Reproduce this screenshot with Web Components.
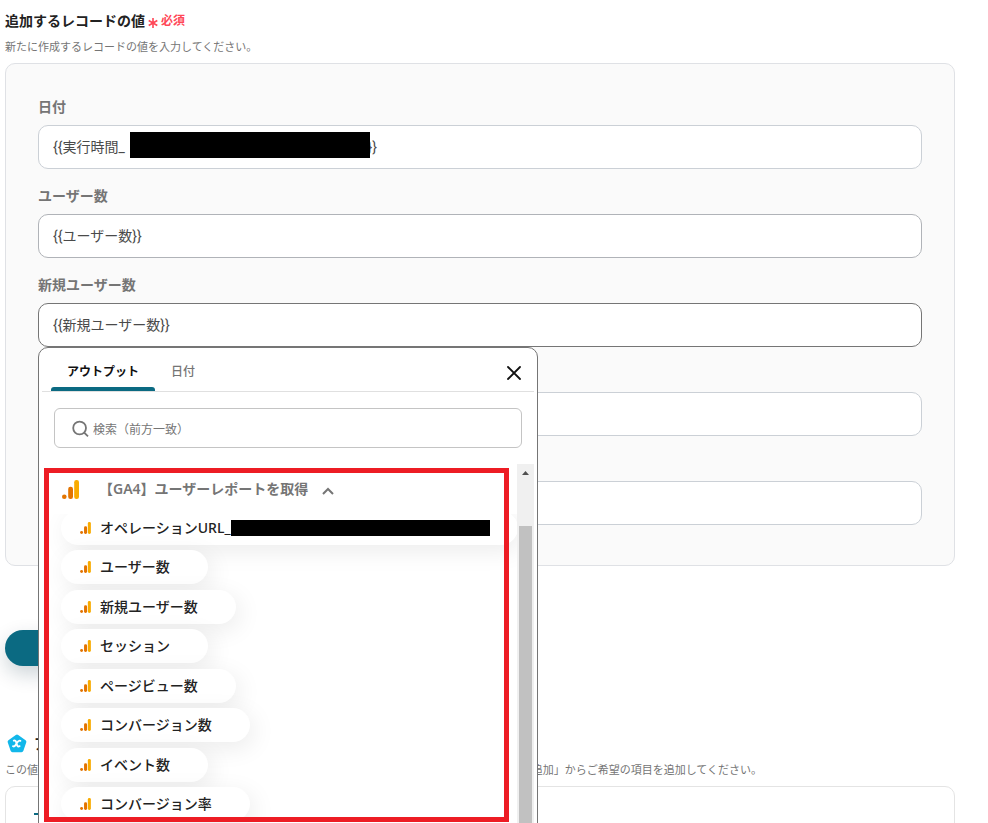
<!DOCTYPE html>
<html lang="ja">
<head>
<meta charset="utf-8">
<title>追加するレコードの値</title>
<style>
    body {
        margin: 0;
        height: 100vh;
        overflow: hidden;
        background: #fff;
        color: #222;
        font: 14px/20px "Noto Sans", "Noto Sans CJK JP", sans-serif;
    }
</style>
</head>
<body>
<record-page></record-page>

<script>
const GA_ICON = `
    <svg class="ga-icon" viewBox="0 0 17 19" aria-hidden="true">
        <rect x="12.2" y="0" width="4.8" height="19" rx="2.2" fill="#f9ab00"/>
        <rect x="6.2" y="6.8" width="4.8" height="12.2" rx="2.2" fill="#e37400"/>
        <circle cx="2.3" cy="16.7" r="2.3" fill="#e37400"/>
    </svg>`;

class RecordField extends HTMLElement {
    constructor() {
        super();
        this.attachShadow({ mode: 'open' });
        this.shadowRoot.innerHTML = `
            <style>
                :host {
                    display: flex;
                    flex-direction: column;
                    gap: 8px;
                }

                label {
                    font-weight: 600;
                    color: #757575;
                }

                .box {
                    position: relative;
                }

                input {
                    display: block;
                    box-sizing: border-box;
                    width: 100%;
                    height: 44px;
                    padding: 0 14px 2px;
                    border: 1px solid var(--field-border, #cbd0d6);
                    border-radius: 10px;
                    outline: none;
                    background: #fff;
                    color: #4a4a4a;
                    font: 14px Roboto, "Noto Sans CJK JP", sans-serif;
                }
            </style>
            <label for="field"></label>
            <div class="box">
                <input id="field" type="text">
                <slot></slot>
            </div>
        `;
    }

    connectedCallback() {
        this.shadowRoot.querySelector('label').textContent = this.getAttribute('label') || '';
        this.shadowRoot.querySelector('input').value = this.getAttribute('value') || '';
    }
}

customElements.define('record-field', RecordField);

class OutputChip extends HTMLElement {
    constructor() {
        super();
        this.attachShadow({ mode: 'open' });
        this.shadowRoot.innerHTML = `
            <style>
                :host {
                    display: block;
                }

                button {
                    display: flex;
                    align-items: center;
                    gap: 9px;
                    width: 100%;
                    height: 34px;
                    padding: 0 38px 0 19px;
                    border: 0;
                    border-radius: 17px;
                    background: #fff;
                    box-shadow: 4px 6px 24px rgba(0, 0, 0, 0.08);
                    color: #222;
                    font: inherit;
                    font-weight: 500;
                    white-space: nowrap;
                }

                svg {
                    flex: none;
                    width: 11px;
                    height: 12px;
                }
            </style>
            <button type="button">${GA_ICON}<slot></slot></button>
        `;
    }
}

customElements.define('output-chip', OutputChip);

class OutputPicker extends HTMLElement {
    constructor() {
        super();
        this.attachShadow({ mode: 'open' });
        this.shadowRoot.innerHTML = `
            <style>
                :host {
                    display: flex;
                    flex-direction: column;
                    box-sizing: border-box;
                    position: absolute;
                    z-index: 10;
                    top: 100%;
                    left: 0;
                    width: 500px;
                    height: 500px;
                    padding: 0 3px;
                    border: 1px solid #757575;
                    border-radius: 10px;
                    background: #fff;
                    font-size: 12px;
                }

                button {
                    border: 0;
                    background: none;
                    font: inherit;
                }

                .tabs {
                    display: flex;
                    height: 43px;
                    padding: 0 9px;
                    border-bottom: 1px solid #e0e0e0;
                }

                .tab {
                    padding: 4px 16px 0;
                    color: #757575;
                    font-weight: 500;
                }

                .tab[aria-selected="true"] {
                    position: relative;
                    color: #111;
                    font-weight: 600;
                }

                .tab[aria-selected="true"]::after {
                    content: "";
                    position: absolute;
                    right: 0;
                    bottom: 0;
                    left: 0;
                    height: 4px;
                    border-radius: 3px 3px 0 0;
                    background: #0b6a82;
                }

                .close {
                    display: flex;
                    align-items: center;
                    margin-left: auto;
                    padding: 7px 4px 0;
                }

                .search {
                    display: flex;
                    align-items: center;
                    gap: 4px;
                    box-sizing: border-box;
                    height: 40px;
                    margin: 16px 12px;
                    padding: 2px 16px 0;
                    border: 1px solid #c4c4c4;
                    border-radius: 6px;
                }

                .search input {
                    flex: 1;
                    min-width: 0;
                    padding: 2px 0 0;
                    border: 0;
                    outline: none;
                    background: none;
                    font: inherit;
                }

                .search input::placeholder {
                    color: #757575;
                    opacity: 1;
                }

                .body {
                    flex: 1;
                    display: flex;
                    min-height: 0;
                }

                .list {
                    flex: 1;
                    min-width: 0;
                    overflow: hidden;
                }

                .group {
                    display: flex;
                    align-items: center;
                    box-sizing: border-box;
                    position: relative;
                    z-index: 1;
                    width: 100%;
                    height: 50px;
                    padding: 0 20px;
                    background: #fff;
                    color: #757575;
                    font-size: 14px;
                    font-weight: 600;
                }

                .group .ga-icon {
                    width: 17px;
                    height: 19px;
                    margin-right: 20px;
                }

                .group .arrow {
                    margin: 4px 0 0 14px;
                }

                .chips {
                    display: flex;
                    flex-direction: column;
                    align-items: flex-start;
                    justify-content: space-between;
                    height: 310px;
                    margin-top: -3px;
                    padding-left: 19px;
                    font-size: 14px;
                }

                .bar {
                    display: flex;
                    flex-direction: column;
                    align-items: center;
                    width: 17px;
                    background: #f0f0f0;
                }

                .bar svg {
                    flex: none;
                    margin: 7px 0 51px;
                }

                .thumb {
                    flex: 1;
                    width: 13px;
                    background: #c1c1c1;
                }
            </style>
            <div class="tabs" role="tablist">
                <button class="tab" role="tab" type="button" aria-selected="true">アウトプット</button>
                <button class="tab" role="tab" type="button" aria-selected="false">日付</button>
                <button class="close" type="button" aria-label="閉じる">
                    <svg width="14" height="14" viewBox="0 0 14 14" stroke="#111" stroke-width="1.8" stroke-linecap="round">
                        <path d="M1 1L13 13M13 1L1 13"/>
                    </svg>
                </button>
            </div>
            <label class="search">
                <svg width="18" height="18" viewBox="0 0 18 18" fill="none" stroke="#757575" stroke-width="1.8">
                    <circle cx="8.6" cy="8" r="6.4"/>
                    <path d="M13.2 12.6L17 16.4"/>
                </svg>
                <input type="text" placeholder="検索（前方一致）" aria-label="検索">
            </label>
            <div class="body">
                <div class="list">
                    <button class="group" type="button" aria-expanded="true">
                        ${GA_ICON}
                        【GA4】ユーザーレポートを取得
                        <svg class="arrow" width="12" height="8" viewBox="0 0 12 8" fill="none" stroke="#757575" stroke-width="2">
                            <path d="M1 7L6 2L11 7"/>
                        </svg>
                    </button>
                    <div class="chips"><slot></slot></div>
                </div>
                <div class="bar" aria-hidden="true">
                    <svg width="7" height="4" viewBox="0 0 7 4"><path d="M0 4L3.5 0L7 4Z" fill="#505050"/></svg>
                    <div class="thumb"></div>
                </div>
            </div>
            <slot name="mark"></slot>
        `;
    }
}

customElements.define('output-picker', OutputPicker);

class RecordPage extends HTMLElement {
    constructor() {
        super();
        this.attachShadow({ mode: 'open' });
        this.shadowRoot.innerHTML = `
            <style>
                :host {
                    display: block;
                    padding: 11px 33px 0 5px;
                }

                h2 {
                    display: flex;
                    align-items: center;
                    gap: 7px;
                    margin: 0;
                    font-size: 14px;
                    font-weight: 600;
                }

                .required {
                    display: flex;
                    align-items: center;
                    gap: 3px;
                    margin-left: -4px;
                    color: #ff4757;
                    font-size: 12px;
                }

                .required svg {
                    margin-top: 4px;
                }

                p {
                    margin: 8px 0;
                    color: #757575;
                    font-size: 11px;
                    line-height: 16px;
                    white-space: nowrap;
                }

                .panel {
                    display: flex;
                    flex-direction: column;
                    gap: 17px;
                    padding: 33px 32px 40px;
                    border: 1px solid #dfe1e5;
                    border-radius: 10px;
                    background: #fafafa;
                }

                .filled {
                    --field-border: #b0b3b8;
                }

                .active {
                    --field-border: #757575;
                }

                .redacted {
                    position: absolute;
                    top: 7px;
                    left: 92px;
                    width: 240px;
                    height: 26px;
                    background: #000;
                }

                .wide {
                    width: 457px;
                }

                .strip {
                    flex: none;
                    width: 259px;
                    height: 16px;
                    margin-left: -8px;
                    background: #000;
                }

                .mark {
                    position: absolute;
                    box-sizing: border-box;
                    z-index: 2;
                    top: 120px;
                    left: 5px;
                    width: 465px;
                    height: 354px;
                    border: 5px solid #ed1c24;
                    pointer-events: none;
                }

                .test {
                    display: block;
                    width: 120px;
                    height: 36px;
                    margin: 64px 0 68px;
                    border: 0;
                    border-radius: 18px;
                    background: #0b6a82;
                    box-shadow: 0 8px 20px rgba(0, 40, 60, 0.2);
                    color: #fff;
                    font: inherit;
                }

                .card {
                    padding: 16px 28px;
                    border: 1px solid #e4e4e4;
                    border-radius: 10px;
                }

                .card button {
                    display: flex;
                    align-items: center;
                    padding: 6px 0;
                    border: 0;
                    background: none;
                }
            </style>
            <h2>追加するレコードの値
                <span class="required">
                    <svg width="10" height="10" viewBox="0 0 10 10" stroke="#ff4757" stroke-width="1.6">
                        <path d="M5 0V10M0.7 2.5L9.3 7.5M9.3 2.5L0.7 7.5"/>
                    </svg>
                    必須
                </span>
            </h2>
            <p>新たに作成するレコードの値を入力してください。</p>
            <div class="panel">
                <record-field label="日付" value="{{実行時間_${'\u2003'.repeat(17)}}}">
                    <span class="redacted"></span>
                </record-field>
                <record-field class="filled" label="ユーザー数" value="{{ユーザー数}}"></record-field>
                <record-field class="active" label="新規ユーザー数" value="{{新規ユーザー数}}">
                    <output-picker>
                        <output-chip class="wide">オペレーションURL_<span class="strip"></span></output-chip>
                        <output-chip>ユーザー数</output-chip>
                        <output-chip>新規ユーザー数</output-chip>
                        <output-chip>セッション</output-chip>
                        <output-chip>ページビュー数</output-chip>
                        <output-chip>コンバージョン数</output-chip>
                        <output-chip>イベント数</output-chip>
                        <output-chip>コンバージョン率</output-chip>
                        <span class="mark" slot="mark"></span>
                    </output-picker>
                </record-field>
                <record-field label="セッション"></record-field>
                <record-field label="ページビュー数"></record-field>
            </div>
            <button class="test" type="button" aria-label="テスト"></button>
            <h2>
                <svg width="22" height="20" viewBox="0 0 22 20" aria-hidden="true">
                    <path d="M10.8 0.9Q12 0 13.2 0.9L20.6 6.2Q21.7 7 21.3 8.3L18.4 16.8Q17.9 18.2 16.5 18.2H7.5Q6.1 18.2 5.6 16.8L2.7 8.3Q2.3 7 3.4 6.2Z" fill="#12b7ea"/>
                    <path d="M8.8 6.6Q10.6 6 11.2 8.2L12 11Q12.6 13 14.6 12.2M15.4 6.8Q13.6 6 12 8.8L10.8 10.8Q9.6 13 8 12.2" fill="none" stroke="#fff" stroke-width="1.9" stroke-linecap="round"/>
                </svg>
                アウトプット
            </h2>
            <p>この値は後続のオペレーションで利用できます。利用したい項目がない場合は、画面の下の「取得する値を追加」からご希望の項目を追加してください。</p>
            <div class="card">
                <button type="button" aria-label="追加">
                    <svg width="14" height="10" viewBox="0 0 14 10" stroke="#0b6a82" stroke-width="2"><path d="M0 5H14"/></svg>
                </button>
            </div>
        `;
    }
}

customElements.define('record-page', RecordPage);
</script>
</body>
</html>
